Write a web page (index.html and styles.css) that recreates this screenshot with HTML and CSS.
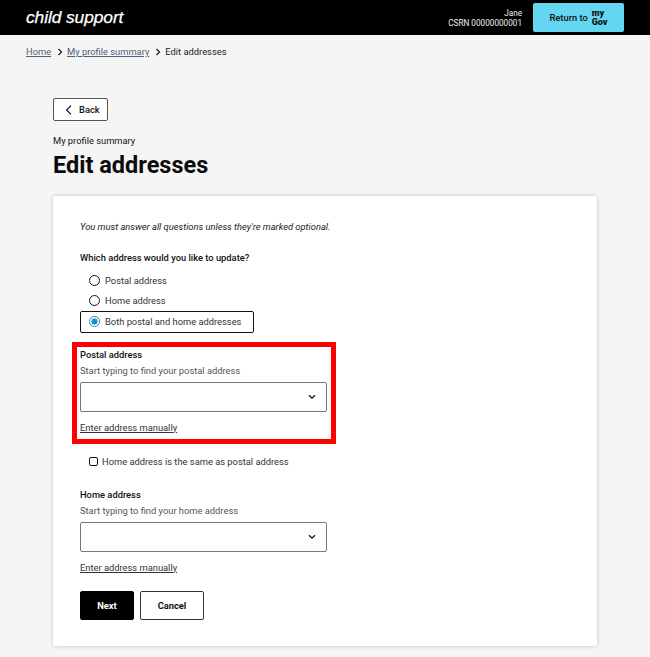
FILE: index.html
```html
<!DOCTYPE html>
<html>
<head>
    <meta charset="utf-8">
    <title>Edit addresses</title>
    <link rel="stylesheet" href="styles.css">
</head>
<body>
    <header class="topbar">
        <div class="logo">child support</div>
        <div class="topbar-right">
            <div class="user">
                <div>Jane</div>
                <div>CSRN 00000000001</div>
            </div>
            <a class="return-btn" href="#">
                <span>Return to</span>
                <span class="mygov">my<br>Gov</span>
            </a>
        </div>
    </header>

    <nav class="breadcrumb">
        <a href="#">Home</a>
        <svg class="crumb-sep" viewBox="0 0 8 10"><path d="M2.500 2 5.500 5 2.500 8"/></svg>
        <a href="#">My profile summary</a>
        <svg class="crumb-sep" viewBox="0 0 8 10"><path d="M2.500 2 5.500 5 2.500 8"/></svg>
        <span class="crumb-current">Edit addresses</span>
    </nav>

    <main class="page">
        <a class="back-btn" href="#">
            <svg viewBox="0 0 10 14"><path d="M7.500 1.500 2 7l5.500 5.500"/></svg>
            <span>Back</span>
        </a>
        <div class="eyebrow">My profile summary</div>
        <h1>Edit addresses</h1>

        <form class="card">
            <p class="intro">You must answer all questions unless they're marked optional.</p>

            <div class="question">Which address would you like to update?</div>
            <div class="radios">
                <label class="radio"><span class="radio-dot"></span>Postal address</label>
                <label class="radio"><span class="radio-dot"></span>Home address</label>
                <label class="radio selected"><span class="radio-dot"></span>Both postal and home addresses</label>
            </div>

            <div class="highlight">
                <div class="field-label">Postal address</div>
                <div class="hint">Start typing to find your postal address</div>
                <div class="select">
                    <svg viewBox="0 0 8 6"><path d="M1 1.200 4 4.200l3-3"/></svg>
                </div>
                <a class="manual" href="#">Enter address manually</a>
            </div>

            <label class="check"><span class="check-box"></span>Home address is the same as postal address</label>

            <div class="field-label">Home address</div>
            <div class="hint">Start typing to find your home address</div>
            <div class="select">
                <svg viewBox="0 0 8 6"><path d="M1 1.200 4 4.200l3-3"/></svg>
            </div>
            <a class="manual" href="#">Enter address manually</a>

            <div class="actions">
                <button type="button" class="btn btn-primary">Next</button>
                <button type="button" class="btn btn-outline">Cancel</button>
            </div>
        </form>
    </main>
</body>
</html>
```

FILE: styles.css
```css
* {
    box-sizing: border-box;
}

body {
    margin: 0;
    background: #f5f5f5;
    color: #111;
    font-family: Roboto, "Liberation Sans", sans-serif;
    font-size: 9.330px;
}

a {
    color: inherit;
}

.topbar {
    display: flex;
    justify-content: space-between;
    align-items: center;
    height: 35px;
    padding: 0 26px;
    background: #000;
    color: #fff;
}

.logo {
    font-family: "Liberation Sans", sans-serif;
    font-style: italic;
    font-size: 17.400px;
    letter-spacing: -0.1px;
    -webkit-text-stroke: 0.25px #fff;
}

.topbar-right {
    display: flex;
    align-items: center;
    gap: 11px;
}

.user {
    text-align: right;
    font-size: 8.200px;
    line-height: 10px;
    color: #eee;
}

.return-btn {
    display: flex;
    align-items: center;
    justify-content: center;
    gap: 4px;
    width: 91px;
    height: 29px;
    background: #65d6f2;
    border-radius: 2px;
    color: #111;
    font-weight: 500;
    text-decoration: none;
}

.mygov {
    font-size: 9px;
    line-height: 9px;
    font-weight: 900;
}

.breadcrumb {
    display: flex;
    align-items: center;
    height: 33px;
    padding-left: 26px;
    color: #4f5f78;
}

.crumb-sep {
    width: 8px;
    height: 10px;
    margin: 0 3px 0 5px;
    fill: none;
    stroke: #222;
    stroke-width: 1.300;
}

.crumb-current {
    color: #222;
}

.page {
    padding: 30px 53px 11px;
}

.back-btn {
    display: flex;
    align-items: center;
    gap: 6px;
    width: 55px;
    height: 23px;
    padding-left: 11px;
    background: #fff;
    border: 1px solid #555;
    border-radius: 2px;
    font-weight: 500;
    text-decoration: none;
}

.back-btn svg {
    width: 8px;
    height: 12px;
    fill: none;
    stroke: #111;
    stroke-width: 1.500;
}

.eyebrow {
    margin-top: 14px;
    line-height: 12px;
}

h1 {
    margin: 3px 0 16px;
    font-size: 23.500px;
    line-height: 30px;
    font-weight: 700;
    color: #0b0b0b;
}

.card {
    height: 450px;
    padding: 25px 27px 0;
    background: #fff;
    border-radius: 2px;
    box-shadow: 0 0 4px rgba(0, 0, 0, 0.2);
}

.intro {
    margin: 0 0 19px;
    line-height: 12px;
    font-style: italic;
    color: #222;
}

.question {
    line-height: 12px;
    font-weight: 500;
    color: #111;
}

.radios {
    margin-top: 5px;
}

.radio {
    display: flex;
    align-items: center;
    gap: 5px;
    height: 22px;
    margin-bottom: -1.500px;
    padding-left: 9px;
    color: #333;
}

.radio.selected {
    width: 174px;
    margin-top: 0.5px;
    border: 1px solid #111;
    border-radius: 2px;
    padding-left: 8px;
}

.radio-dot {
    width: 11px;
    height: 11px;
    border: 1.300px solid #111;
    border-radius: 50%;
    background: #fff;
}

.selected .radio-dot {
    border-color: #1c8fb8;
    background: radial-gradient(circle, #1c8fb8 0 2.800px, #fff 3.300px);
}

.highlight {
    width: 264px;
    height: 102px;
    margin: 11px 0 0 -8px;
    padding: 2px 4px 0 3px;
    border: 5px solid #f00;
}

.field-label {
    line-height: 12px;
    font-weight: 500;
    color: #111;
}

.hint {
    margin-top: 4px;
    line-height: 12px;
    color: #555;
}

.select {
    display: flex;
    align-items: center;
    justify-content: flex-end;
    width: 247px;
    height: 30px;
    margin-top: 5px;
    padding-right: 10px;
    background: #fff;
    border: 1px solid #777;
    border-radius: 2px;
}

.select svg {
    width: 8px;
    height: 6px;
    fill: none;
    stroke: #111;
    stroke-width: 1.300;
}

.manual {
    display: block;
    margin-top: 9.500px;
    line-height: 12px;
    color: #333;
}

.check {
    display: flex;
    align-items: center;
    gap: 4px;
    height: 12px;
    margin-top: 11px;
    padding-left: 9px;
    color: #333;
}

.check-box {
    width: 9px;
    height: 9px;
    border: 1.300px solid #111;
    border-radius: 2px;
}

.check + .field-label {
    margin-top: 22px;
}

.actions {
    display: flex;
    gap: 6px;
    margin-top: 17px;
}

.btn {
    height: 29px;
    border-radius: 2px;
    font-family: inherit;
    font-size: 9.330px;
    font-weight: 700;
}

.btn-primary {
    width: 54px;
    background: #000;
    border: 1px solid #000;
    color: #fff;
}

.btn-outline {
    width: 64px;
    background: #fff;
    border: 1px solid #333;
    color: #111;
}
```
